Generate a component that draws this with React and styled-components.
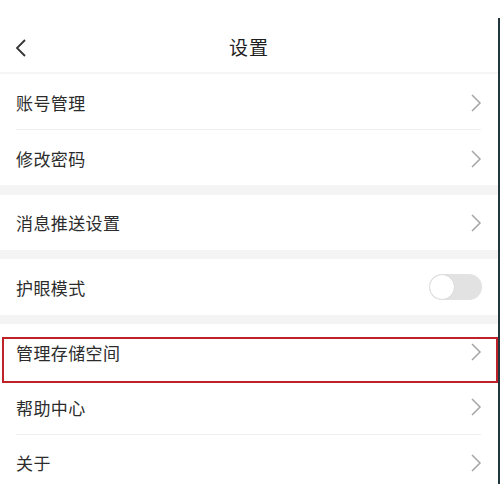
import React from "react";
import styled, { createGlobalStyle } from "styled-components";

const Global = createGlobalStyle`
  html, body { margin: 0; padding: 0; background: #fff; }
  body { font-family: "Noto Sans CJK SC", "Noto Sans", sans-serif; width: 500px; }
`;

const StatusBar = styled.div`
  height: 18px;
  background: #fff;
`;

const Screen = styled.div`
  border-right: 2px solid #22363d;
  background: #fff;
`;

const Header = styled.div`
  height: 54px;
  border-bottom: 2px solid #f5f5f5;
  display: flex;
  align-items: center;
  justify-content: center;
  position: relative;
`;

const BackButton = styled.div`
  position: absolute;
  left: 14px;
  top: 20px;
  width: 16px;
  height: 20px;
  display: flex;
`;

const Title = styled.div`
  font-size: 19px;
  font-weight: 400;
  color: #1e1e1e;
  letter-spacing: 1px;
  margin-top: 2px;
`;

const Band = styled.div`
  height: ${(p) => p.$h}px;
  background: #f4f4f4;
`;

const Group = styled.div`
  background: #fff;
`;

const Row = styled.div`
  height: ${(p) => p.$h}px;
  display: flex;
  align-items: center;
  justify-content: space-between;
  padding: 0 16px 0 16px;
  position: relative;
  padding-top: ${(p) => p.$shift || 0}px;
  box-sizing: border-box;
`;

const Label = styled.span`
  font-size: 17px;
  color: #2c2c2c;
  letter-spacing: 0.4px;
`;

const Divider = styled.div`
  height: 1px;
  margin: 0 17px 0 16px;
  background: #efefef;
`;

const Toggle = styled.div`
  width: 53px;
  height: 26px;
  border-radius: 13px;
  background: #e2e2e2;
  position: relative;
`;

const Knob = styled.div`
  position: absolute;
  left: 1px;
  top: 1px;
  width: 24px;
  height: 24px;
  border-radius: 50%;
  background: #fff;
  box-shadow: 0 0 1px rgba(0, 0, 0, 0.2);
`;

const Highlight = styled.div`
  position: absolute;
  left: 2px;
  right: 0px;
  top: 13px;
  height: 46px;
  border: 2px solid #be2229;
  box-sizing: border-box;
  pointer-events: none;
`;

const Chevron = () => (
  <svg width="12" height="20" viewBox="0 0 12 20">
    <polyline points="2,2 10,10 2,18" fill="none" stroke="#a4a4a4" strokeWidth="1.5" />
  </svg>
);

const Back = () => (
  <svg width="16" height="20" viewBox="0 0 16 20">
    <polyline points="11,2 3,10 11,18" fill="none" stroke="#333" strokeWidth="1.8" />
  </svg>
);

const Item = ({ label, h = 55, shift, children }) => (
  <Row $h={h} $shift={shift}>
    <Label>{label}</Label>
    {children || <Chevron />}
  </Row>
);

export default function App() {
  return (
    <>
      <Global />
      <StatusBar />
      <Screen>
        <Header>
          <BackButton>
            <Back />
          </BackButton>
          <Title>设置</Title>
        </Header>
        <Group>
          <Item label="账号管理" shift={2} />
          <Divider />
          <Item label="修改密码" shift={2} />
        </Group>
        <Band $h={10} />
        <Group>
          <Item label="消息推送设置" />
        </Group>
        <Band $h={9} />
        <Group>
          <Item label="护眼模式" h={56}>
            <Toggle>
              <Knob />
            </Toggle>
          </Item>
        </Group>
        <Band $h={9} />
        <Group>
          <Row $h={56}>
            <Label>管理存储空间</Label>
            <Chevron />
            <Highlight />
          </Row>
          <Item label="帮助中心" h={54} />
          <Divider />
          <Item label="关于" h={55} />
        </Group>
      </Screen>
    </>
  );
}
